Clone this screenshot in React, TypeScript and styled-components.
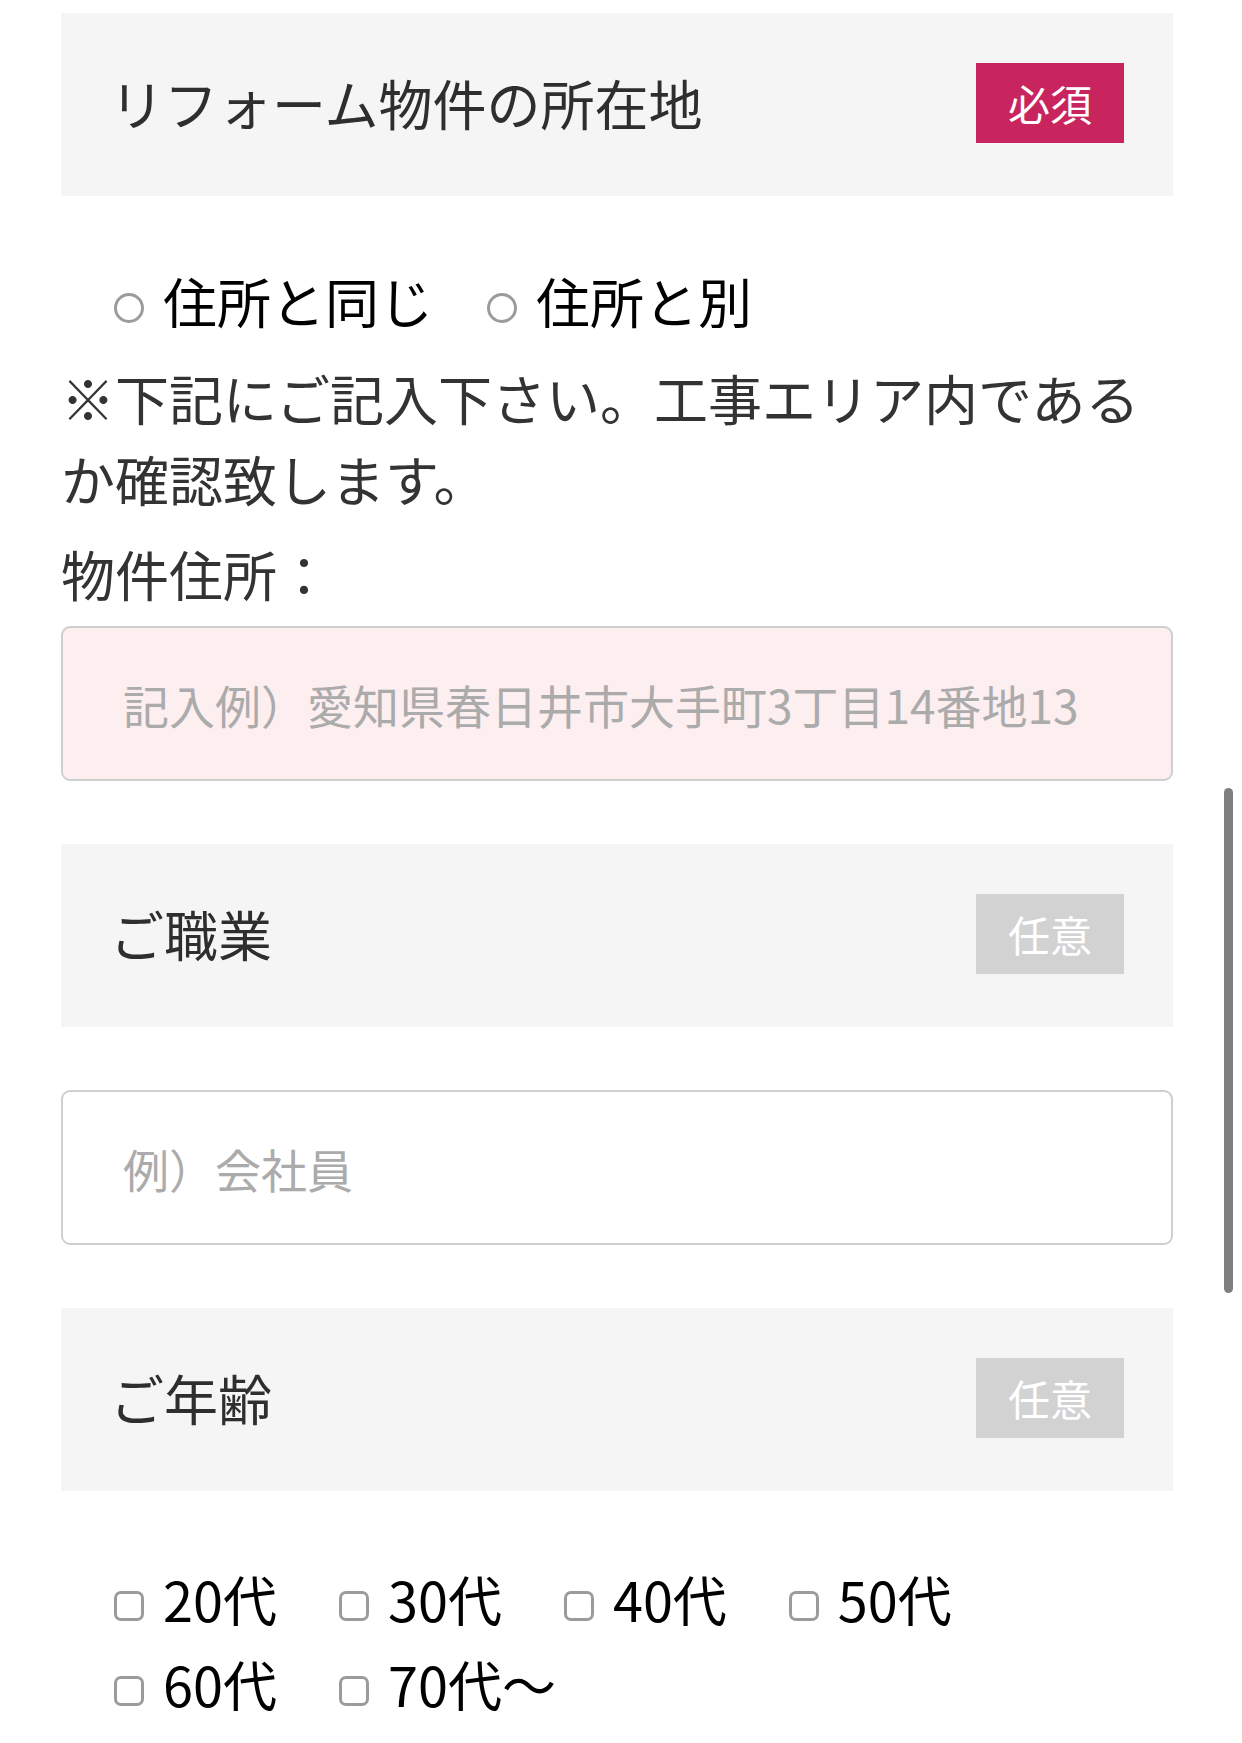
import React from "react";
import styled, { createGlobalStyle } from "styled-components";

const GlobalStyle = createGlobalStyle`
  * {
    box-sizing: border-box;
  }
  body {
    margin: 0;
    background: #ffffff;
    font-family: "Noto Sans CJK JP", "Noto Sans", sans-serif;
    color: #333333;
  }
`;

const App = () => {
  return (
    <>
      <GlobalStyle />
      <Page>
        <SectionHead>
          <HeadTitle>リフォーム物件の所在地</HeadTitle>
          <Badge $required>必須</Badge>
        </SectionHead>

        <ChoiceRow>
          <Choice>
            <Radio type="radio" name="place" />
            <span>住所と同じ</span>
          </Choice>
          <Choice>
            <Radio type="radio" name="place" />
            <span>住所と別</span>
          </Choice>
        </ChoiceRow>
        <Note>※下記にご記入下さい。工事エリア内であるか確認致します。</Note>
        <FieldLabel>物件住所：</FieldLabel>
        <TextInput $tint type="text" placeholder="記入例）愛知県春日井市大手町3丁目14番地13" />

        <SectionHead>
          <HeadTitle>ご職業</HeadTitle>
          <Badge>任意</Badge>
        </SectionHead>
        <TextInput type="text" placeholder="例）会社員" />

        <SectionHead>
          <HeadTitle>ご年齢</HeadTitle>
          <Badge>任意</Badge>
        </SectionHead>
        <AgeList>
          {["20代", "30代", "40代", "50代", "60代", "70代〜"].map((age) => (
            <Choice key={age}>
              <Check type="checkbox" />
              <span>{age}</span>
            </Choice>
          ))}
        </AgeList>
      </Page>
      <ScrollThumb />
    </>
  );
};

export default App;

const Page = styled.div`
  display: flex;
  flex-direction: column;
  width: 1242px;
  min-height: 1743px;
  padding: 13px 69px 0 61px;
`;

const SectionHead = styled.div`
  display: flex;
  align-items: center;
  justify-content: space-between;
  height: 183px;
  padding: 0 49px 4px 49px;
  background: #f5f5f5;
  margin-bottom: 63px;
`;

const HeadTitle = styled.h2`
  margin: 0;
  font-size: 54px;
  font-weight: 400;
  line-height: 1;
  color: #2e2e2e;
`;

const Badge = styled.span<{ $required?: boolean }>`
  display: flex;
  align-items: center;
  justify-content: center;
  width: 148px;
  height: 80px;
  font-size: 42px;
  line-height: 1;
  color: #ffffff;
  background: ${(p) => (p.$required ? "#c8245e" : "#d2d2d2")};
`;

const ChoiceRow = styled.div`
  display: flex;
  align-items: center;
  gap: 54px;
  padding-left: 53px;
  height: 81px;
  margin-top: 1px;
  margin-bottom: 16px;
`;

const Choice = styled.label`
  display: flex;
  align-items: center;
  gap: 19px;
  font-size: 54px;
  line-height: 85px;
  color: #000000;
`;

const Radio = styled.input`
  appearance: none;
  margin: 14px 0 0;
  width: 30px;
  height: 30px;
  border: 3px solid #9b9b9b;
  border-radius: 50%;
  background: #ffffff;
`;

const Check = styled.input`
  appearance: none;
  margin: 14px 0 0;
  width: 30px;
  height: 30px;
  border: 3px solid #9b9b9b;
  border-radius: 7px;
  background: #ffffff;
`;

const Note = styled.p`
  margin: 0 0 14px;
  font-size: 54px;
  line-height: 81px;
  color: #333333;
`;

const FieldLabel = styled.p`
  margin: 0 0 12px;
  font-size: 54px;
  line-height: 81px;
  color: #333333;
`;

const TextInput = styled.input<{ $tint?: boolean }>`
  display: block;
  width: 100%;
  height: 155px;
  margin: 0 0 63px;
  padding: 0 0 0 60px;
  border: 2px solid #cfcfcf;
  border-radius: 9px;
  background: ${(p) => (p.$tint ? "#fdeef0" : "#ffffff")};
  font-family: inherit;
  font-size: 46px;
  color: #333333;
  outline: none;
  &::placeholder {
    color: #ababab;
  }
`;

const AgeList = styled.div`
  display: flex;
  flex-wrap: wrap;
  column-gap: 62px;
  padding: 2px 20px 0 53px;
`;

const ScrollThumb = styled.div`
  position: fixed;
  top: 788px;
  right: 9px;
  width: 9px;
  height: 505px;
  border-radius: 5px;
  background: #7f7f7f;
`;
